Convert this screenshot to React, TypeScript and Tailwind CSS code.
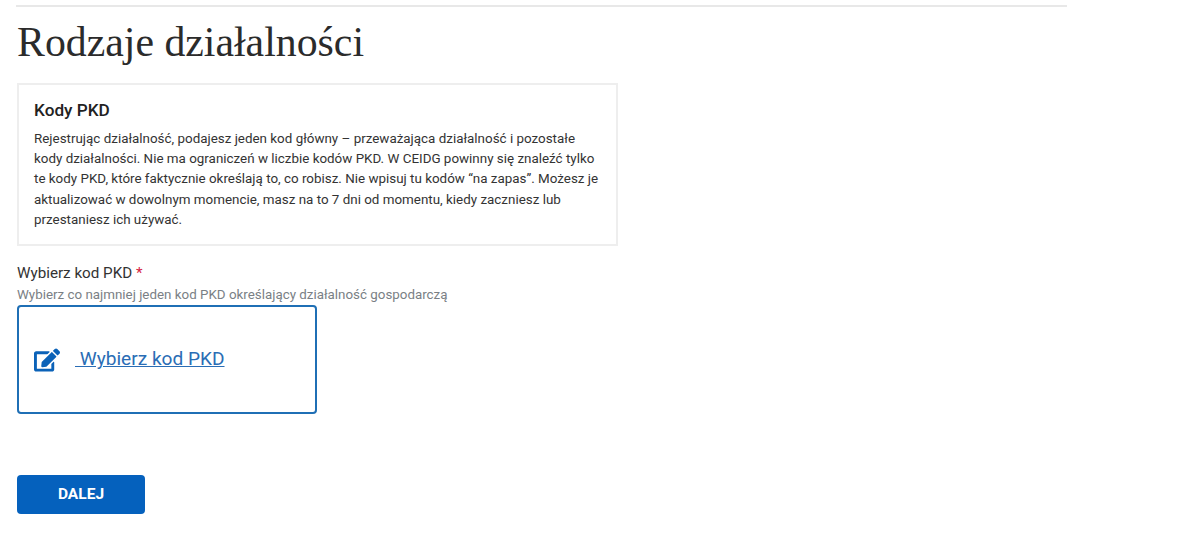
import { FaEdit } from "react-icons/fa";

export default function App() {
  return (
    <div className="min-h-[536px] bg-white pl-[17px] pt-[5px] font-['Roboto',sans-serif] text-[#222]">
      <div className="-ml-px h-0.5 w-[1051px] bg-[#e8e8e8]" />
      <h1 className="mt-[9px] font-['Liberation_Serif',serif] text-[41.8px] leading-[52px] text-[#2b2b2b]">
        Rodzaje działalności
      </h1>
      <section className="mt-[15px] h-[163px] w-[601px] border-2 border-[#eeeeee] px-[15px] pt-[15px]">
        <h2 className="text-[17.2px] leading-5 font-medium">Kody PKD</h2>
        <p className="mt-[9px] text-[13.4px] leading-[20.2px] text-[#333]">
          Rejestrując działalność, podajesz jeden kod główny – przeważająca działalność i pozostałe
          <br />
          kody działalności. Nie ma ograniczeń w liczbie kodów PKD. W CEIDG powinny się znaleźć tylko
          <br />
          te kody PKD, które faktycznie określają to, co robisz. Nie wpisuj tu kodów “na zapas”. Możesz je
          <br />
          aktualizować w dowolnym momencie, masz na to 7 dni od momentu, kiedy zaczniesz lub
          <br />
          przestaniesz ich używać.
        </p>
      </section>
      <label className="mt-[17px] block text-[15.2px] leading-5 text-[#333]">
        Wybierz kod PKD <span className="text-[#d5233f]">*</span>
      </label>
      <p className="mt-[3px] text-[13.36px] leading-[18px] text-[#7a7f85]">
        Wybierz co najmniej jeden kod PKD określający działalność gospodarczą
      </p>
      <div className="mt-px flex h-[109px] w-[300px] items-center rounded border-2 border-[#1f6fb5] pl-[15px]">
        <FaEdit className="size-[26px] text-[#0b62b8]" />
        <a href="#" className="ml-[15px] whitespace-pre text-[19.1px] text-[#2a6db5] underline">
          {" Wybierz kod PKD"}
        </a>
      </div>
      <button className="mt-[61px] h-[39px] w-[128px] rounded bg-[#0561bd] text-[15.5px] font-bold text-white">
        DALEJ
      </button>
    </div>
  );
}
